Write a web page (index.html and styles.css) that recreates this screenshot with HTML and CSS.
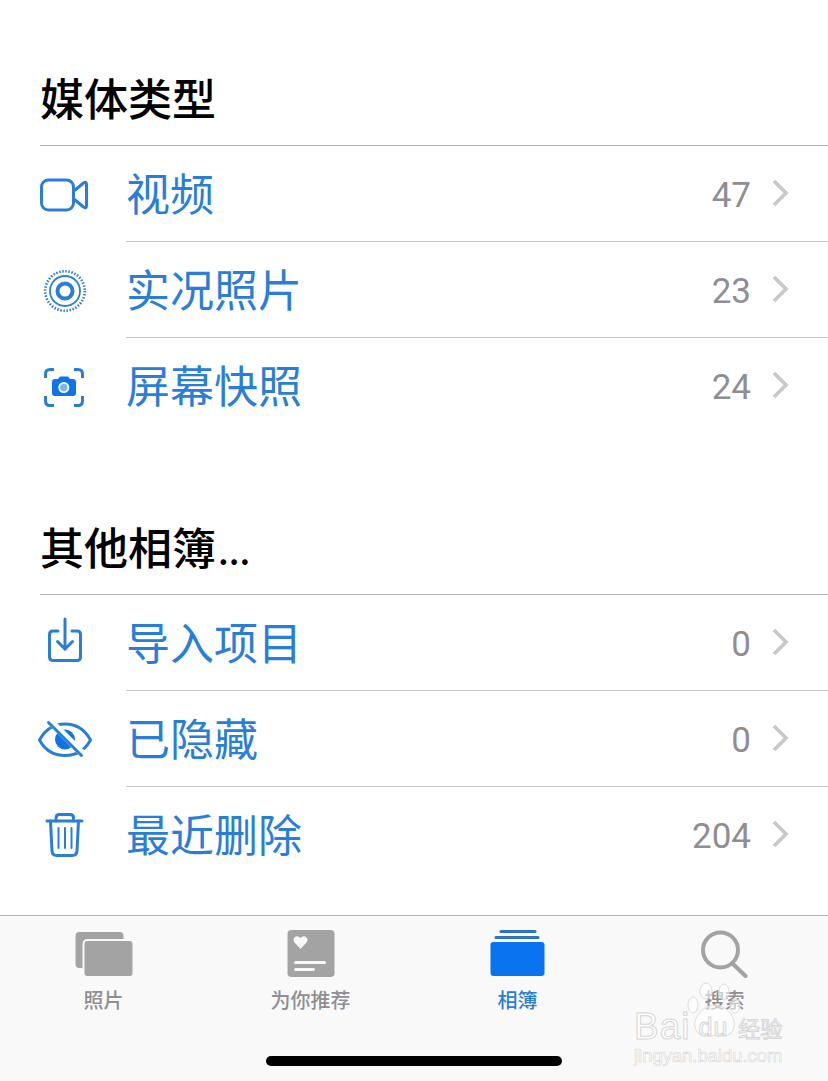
FILE: index.html
```html
<!DOCTYPE html>
<html>
	<head>
		<meta charset="UTF-8">
		<title>相簿</title>
		<link rel="stylesheet" href="styles.css">
	</head>
	<body>
		<div class="page">
			<div class="section first">
				<h2 class="title">媒体类型</h2>
				<div class="row">
					<div class="icon">
						<svg width="56" height="56" viewBox="0 0 56 56" fill="none" stroke="#2a7ed8" stroke-width="3">
							<rect x="5.5" y="14" width="32" height="30" rx="7"/>
							<path d="M38.5 24.5 L47.5 17 Q50.5 15 50.5 18.5 V39.5 Q50.5 43 47.5 41 L38.5 33.5" stroke-linejoin="round"/>
						</svg>
					</div>
					<div class="cell">
						<span class="name">视频</span>
						<span class="count">47</span>
						<svg class="arrow" width="18" height="28" viewBox="0 0 18 28"><polyline points="2,2 14,14 2,26"/></svg>
					</div>
				</div>
				<div class="row">
					<div class="icon">
						<svg width="56" height="56" viewBox="0 0 56 56" fill="none" stroke="#2a7ed8">
							<circle cx="29" cy="29" r="19.8" stroke-width="2.6" stroke-dasharray="1.5 1.6"/>
							<circle cx="29" cy="29" r="15" stroke-width="1.8"/>
							<circle cx="29" cy="29" r="7.5" stroke-width="4"/>
						</svg>
					</div>
					<div class="cell">
						<span class="name">实况照片</span>
						<span class="count">23</span>
						<svg class="arrow" width="18" height="28" viewBox="0 0 18 28"><polyline points="2,2 14,14 2,26"/></svg>
					</div>
				</div>
				<div class="row">
					<div class="icon">
						<svg width="56" height="56" viewBox="0 0 56 56" fill="none" stroke="#2a7ed8" stroke-width="3">
							<path d="M18 11.5 H14 Q9.5 11.5 9.5 16 V20"/>
							<path d="M38 11.5 H42 Q46.5 11.5 46.5 16 V20"/>
							<path d="M18 47.5 H14 Q9.5 47.5 9.5 43 V38"/>
							<path d="M38 47.5 H42 Q46.5 47.5 46.5 43 V38"/>
							<path d="M19 21 H22 L24 18.5 H32 L34 21 H37 Q40 21 40 24 V35 Q40 38 37 38 H19 Q16 38 16 35 V24 Q16 21 19 21 Z" fill="#0f74ea" stroke="none"/>
							<circle cx="27.8" cy="29.5" r="4.6" fill="#7fb4ee" stroke="#fff" stroke-width="1.8"/>
						</svg>
					</div>
					<div class="cell">
						<span class="name">屏幕快照</span>
						<span class="count">24</span>
						<svg class="arrow" width="18" height="28" viewBox="0 0 18 28"><polyline points="2,2 14,14 2,26"/></svg>
					</div>
				</div>
			</div>
			<div class="section">
				<h2 class="title">其他相簿<span class="dots">...</span></h2>
				<div class="row">
					<div class="icon">
						<svg width="56" height="56" viewBox="0 0 56 56" fill="none" stroke="#2a7ed8" stroke-width="3" stroke-linecap="round" stroke-linejoin="round">
							<path d="M22 16 H17 Q13.5 16 13.5 19.5 V42 Q13.5 45.5 17 45.5 H41 Q44.5 45.5 44.5 42 V19.5 Q44.5 16 41 16 H36"/>
							<path d="M29 4 V34"/>
							<path d="M21.5 26.5 L29 34 L36.5 26.5"/>
						</svg>
					</div>
					<div class="cell">
						<span class="name">导入项目</span>
						<span class="count">0</span>
						<svg class="arrow" width="18" height="28" viewBox="0 0 18 28"><polyline points="2,2 14,14 2,26"/></svg>
					</div>
				</div>
				<div class="row">
					<div class="icon">
						<svg width="56" height="56" viewBox="0 0 56 56" fill="none" stroke="#2a7ed8" stroke-width="3">
							<path d="M3.5 29 C10 17 19 13 29 13 C39 13 48 17 54.5 29 C48 41 39 44.5 29 44.5 C19 44.5 10 41 3.5 29 Z" stroke-linejoin="round"/>
							<circle cx="29" cy="28.5" r="10" fill="#0f74ea" stroke="none"/>
							<path d="M14 10 L47 43" stroke="#fff" stroke-width="7"/>
							<path d="M12.5 11.5 L45.5 44.5" stroke-linecap="round"/>
						</svg>
					</div>
					<div class="cell">
						<span class="name">已隐藏</span>
						<span class="count">0</span>
						<svg class="arrow" width="18" height="28" viewBox="0 0 18 28"><polyline points="2,2 14,14 2,26"/></svg>
					</div>
				</div>
				<div class="row">
					<div class="icon">
						<svg width="56" height="56" viewBox="0 0 56 56" fill="none" stroke="#2a7ed8" stroke-width="3" stroke-linecap="round" stroke-linejoin="round">
							<path d="M11 14 H46"/>
							<path d="M20 14 V11 Q20 7.5 23.5 7.5 H34 Q37.5 7.5 37.5 11 V14"/>
							<path d="M14.5 14 L16 44 Q16.3 48.5 21 48.5 H36 Q40.7 48.5 41 44 L42.5 14"/>
							<path d="M22.5 21 V41 M29 21 V41 M35.5 21 V41" stroke-width="2"/>
						</svg>
					</div>
					<div class="cell">
						<span class="name">最近删除</span>
						<span class="count">204</span>
						<svg class="arrow" width="18" height="28" viewBox="0 0 18 28"><polyline points="2,2 14,14 2,26"/></svg>
					</div>
				</div>
			</div>
			<div class="tabbar">
				<div class="tabs">
					<div class="tab">
						<svg width="64" height="50" viewBox="0 0 64 50">
							<rect x="3.5" y="4" width="48" height="36" rx="4" fill="#a3a3a3"/>
							<rect x="10.5" y="11" width="52" height="39" rx="5" fill="#f9f9f9"/>
							<rect x="12.5" y="13" width="48" height="35" rx="3" fill="#a3a3a3"/>
						</svg>
						<span>照片</span>
					</div>
					<div class="tab">
						<svg width="64" height="50" viewBox="0 0 64 50">
							<rect x="8.5" y="2" width="47" height="47" rx="4" fill="#a3a3a3"/>
							<path d="M21.5 21 L15.5 14.5 Q13.5 11.5 15.5 9.5 Q18.5 7 21.5 10 Q24.5 7 27.5 9.5 Q29.5 11.5 27.5 14.5 Z" fill="#f9f9f9"/>
							<rect x="15" y="33" width="32" height="3" rx="1.5" fill="#f9f9f9"/>
							<rect x="15" y="40" width="21" height="3" rx="1.5" fill="#f9f9f9"/>
						</svg>
						<span>为你推荐</span>
					</div>
					<div class="tab on">
						<svg width="64" height="50" viewBox="0 0 64 50">
							<rect x="13.5" y="2" width="37" height="3" rx="1.5" fill="#2d72c4"/>
							<rect x="8.5" y="8" width="45" height="3" rx="1.5" fill="#2d72c4"/>
							<rect x="4.5" y="14" width="54" height="34" rx="3" fill="#0a74f0"/>
						</svg>
						<span>相簿</span>
					</div>
					<div class="tab">
						<svg width="64" height="50" viewBox="0 0 64 50" fill="none" stroke="#a3a3a3" stroke-width="4" stroke-linecap="round">
							<circle cx="27.5" cy="22" r="17.5"/>
							<path d="M39 35 L52.5 48"/>
						</svg>
						<span>搜索</span>
					</div>
				</div>
				<div class="homebar"></div>
				<div class="mark">
					<svg class="paw" width="70" height="70" viewBox="0 0 70 70" fill="#fff" fill-opacity="0.55" stroke="#dcdcdc">
						<ellipse cx="11" cy="24" rx="5" ry="8"/>
						<ellipse cx="24" cy="10" rx="6" ry="8"/>
						<ellipse cx="42" cy="11" rx="5" ry="8"/>
						<ellipse cx="53" cy="25" rx="5" ry="7"/>
						<path d="M33 24 C44 24 54 36 52 46 C50 56 40 56 33 54 C26 56 15 56 13 46 C11 36 22 24 33 24 Z"/>
					</svg>
					<div class="mark1"><span>Bai</span><span class="du">du</span><span class="jy">经验</span></div>
					<div class="mark2">jingyan.baidu.com</div>
				</div>
			</div>
		</div>
	</body>
</html>
```

FILE: styles.css
```css
*{
	margin: 0;
	padding: 0;
	box-sizing: border-box;
}
body{
	background: #fff;
	font-family: "Noto Sans CJK SC", "Liberation Sans", sans-serif;
}
.page{
	width:828px;
	height:1081px;
	overflow: hidden;
	display: flex;
	flex-direction: column;
}
.section{
	margin-top: 85px;
}
.section.first{
	margin-top: 67px;
}
.title{
	margin-left: 40px;
	height:79px;
	line-height: 60px;
	padding-bottom: 18px;
	border-bottom: 1px solid #b4b4b4;
	font-size: 44px;
	font-weight: 500;
	color: #000;
}
.section:not(.first) .title{
	margin-top: -3px;
}
.dots{
	font-size: 36px;
	margin-left: 2px;
}
.row{
	display: flex;
	height:96px;
}
.icon{
	width:126px;
	padding: 20px 0 0 36px;
	flex-shrink: 0;
}
.icon svg{
	display: block;
}
.cell{
	flex: 1;
	display: flex;
	align-items: center;
	padding-right: 38px;
	border-bottom: 1px solid #c6c6c8;
}
.row:last-child .cell{
	border-bottom: none;
	padding-bottom: 1px;
}
.name{
	flex: 1;
	margin-bottom: 4px;
	font-size: 44px;
	color: #2a7ed8;
}
.count{
	margin-top: 4px;
	font-family: Roboto, "Liberation Sans", sans-serif;
	font-size: 35px;
	color: #8e8e93;
}
.arrow{
	margin: 0 0 2px 21px;
}
.arrow polyline{
	fill: none;
	stroke: #c7c7cc;
	stroke-width: 3.6;
}
.tabbar{
	margin-top: 32px;
	flex: 1;
	position: relative;
	background: #f9f9f9;
	border-top: 1px solid #b5b5b5;
}
.tabs{
	display: flex;
	padding-top: 12px;
}
.tab{
	width:207px;
	display: flex;
	flex-direction: column;
	align-items: center;
	font-size: 20px;
	line-height: 30px;
	font-weight: 500;
	color: #8f8f93;
}
.tab svg{
	display: block;
	margin-bottom: 7px;
}
.tab.on{
	color: #2a7ed8;
}
.homebar{
	width:296px;
	height:10px;
	margin: 41px 0 0 266px;
	background: #000;
	border-radius: 5px;
}
.mark{
	position: absolute;
	left: 634px;
	top: 95px;
	width:150px;
}
.paw{
	position: absolute;
	left: 48px;
	top: -30px;
}
.mark1{
	position: relative;
	display: flex;
	align-items: center;
	height:32px;
	font-family: "Liberation Sans", sans-serif;
	font-size: 37px;
	color: #fff;
	-webkit-text-stroke: 1px #d6d6d6;
	letter-spacing: 1px;
	white-space: nowrap;
}
.du{
	font-size: 25px;
	margin-left: 8px;
}
.jy{
	font-family: "Noto Sans CJK SC", sans-serif;
	font-size: 22px;
	letter-spacing: 0;
	margin-left: 10px;
}
.mark2{
	margin-top: 2px;
	font-family: "Liberation Sans", sans-serif;
	font-size: 18.4px;
	color: #fff;
	-webkit-text-stroke: 0.6px #d6d6d6;
	white-space: nowrap;
}
```
